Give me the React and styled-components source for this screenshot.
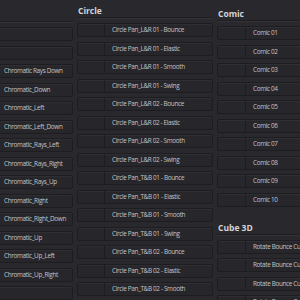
import React from 'react';
import styled, { createGlobalStyle } from 'styled-components';

const GlobalStyle = createGlobalStyle`
  html, body {
    margin: 0;
    padding: 0;
    background: #28282d;
    overflow: hidden;
  }
  body {
    font-family: "Open Sans", "Noto Sans", sans-serif;
  }
`;

const Panel = styled.div`
  display: flex;
  gap: 4px;
  width: 300px;
  height: 300px;
  overflow: hidden;
  background: #28282d;
`;

const Column = styled.div`
  flex-shrink: 0;
  width: ${({ $width }) => $width}px;
  margin-left: ${({ $offset }) => $offset || 0}px;
  padding-top: ${({ $top }) => $top}px;
  display: flex;
  flex-direction: column;
`;

const Group = styled.div`
  display: flex;
  flex-direction: column;
  margin-bottom: 15px;
`;

const Heading = styled.div`
  height: 12px;
  line-height: 12px;
  font-size: 8.5px;
  font-weight: 700;
  color: #d4d4d8;
  padding-left: 1px;
  white-space: nowrap;
  text-indent: ${({ $shift }) => $shift || 0}px;
  border-bottom: 1px solid #1e1e22;
  box-shadow: 0 1px 0 #323237;
  margin-bottom: 5px;
`;

const List = styled.div`
  display: flex;
  flex-direction: column;
  gap: 4.5px;
`;

const Row = styled.div`
  display: flex;
  height: 14px;
  box-sizing: border-box;
  border: 1px solid #1d1d21;
  border-radius: 2px;
  background: #26262b;
  box-shadow: inset 0 1px 0 #2e2e33;
`;

const Thumb = styled.div`
  flex-shrink: 0;
  width: ${({ $width }) => $width}px;
  border-right: 1px solid #1d1d21;
`;

const Label = styled.div`
  flex: 1;
  min-width: 0;
  padding-left: 7px;
  font-size: 6.4px;
  letter-spacing: -0.35px;
  line-height: 12px;
  color: #c4c4c8;
  white-space: nowrap;
  overflow: hidden;
  text-indent: ${({ $shift }) => $shift || 0}px;
`;

const leftRows = [
  { name: 's', shift: -9 },
  { name: 's', shift: -9 },
  { name: 'Chromatic Rays Down' },
  { name: 'Chromatic_Down' },
  { name: 'Chromatic_Left' },
  { name: 'Chromatic_Left_Down' },
  { name: 'Chromatic_Rays_Left' },
  { name: 'Chromatic_Rays_Right' },
  { name: 'Chromatic_Rays_Up' },
  { name: 'Chromatic_Right' },
  { name: 'Chromatic_Right_Down' },
  { name: 'Chromatic_Up' },
  { name: 'Chromatic_Up_Left' },
  { name: 'Chromatic_Up_Right' },
  { name: '' },
];

const circleRows = [];
['L&R', 'T&B'].forEach((dir) => {
  ['01', '02'].forEach((n) => {
    ['Bounce', 'Elastic', 'Smooth', 'Swing'].forEach((ease) => {
      circleRows.push({ name: `Circle Pan_${dir} ${n} - ${ease}` });
    });
  });
});

const comicRows = Array.from({ length: 10 }, (_, i) => ({
  name: `Comic ${String(i + 1).padStart(2, '0')}`,
}));

const cubeRows = ['Down', 'Left', 'Right', 'Up'].map((d) => ({
  name: `Rotate Bounce Cube ${d}`,
}));

const ItemList = ({ rows, thumb }) => (
  <List>
    {rows.map((r, i) => (
      <Row key={i}>
        <Thumb $width={thumb} />
        <Label $shift={r.shift}>{r.name}</Label>
      </Row>
    ))}
  </List>
);

const App = () => {
  return (
    <>
      <GlobalStyle />
      <Panel>
        <Column $width={104} $offset={-31} $top={9}>
          <Group>
            <Heading $shift={-3}>Color</Heading>
            <ItemList rows={leftRows} thumb={26} />
          </Group>
        </Column>

        <Column $width={136} $top={5}>
          <Group>
            <Heading>Circle</Heading>
            <ItemList rows={circleRows} thumb={26} />
          </Group>
        </Column>

        <Column $width={160} $top={8}>
          <Group>
            <Heading>Comic</Heading>
            <ItemList rows={comicRows} thumb={27} />
          </Group>
          <Group>
            <Heading>Cube 3D</Heading>
            <ItemList rows={cubeRows} thumb={27} />
          </Group>
        </Column>
      </Panel>
    </>
  );
};

export default App;
